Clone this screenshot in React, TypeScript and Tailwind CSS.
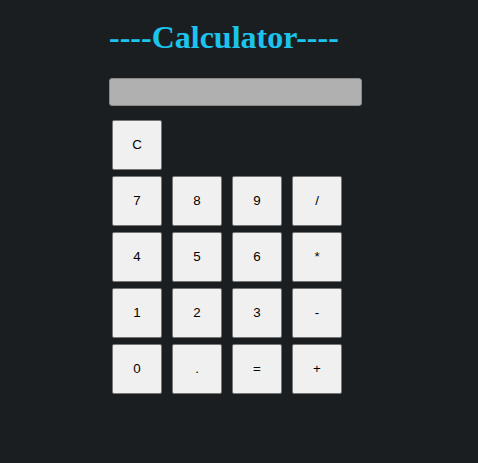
const rows = [
  ['7', '8', '9', '/'],
  ['4', '5', '6', '*'],
  ['1', '2', '3', '-'],
  ['0', '.', '=', '+'],
]

function Key({ label }: { label: string }) {
  return (
    <button className="w-[50px] h-[50px] bg-[#f0f0f0] border border-[#767676] rounded-[2px] text-[13.33px] text-black font-['Liberation_Sans',Arial,sans-serif] flex items-center justify-center">
      {label}
    </button>
  )
}

export default function App() {
  return (
    <div className="w-[478px] h-[463px] bg-[#1b1e21] pl-[109px] pt-[19px]">
      <h1 className="text-[32px] leading-[36px] font-bold text-[#1cc3ec] font-['Liberation_Serif','Times_New_Roman',serif]">
        ----Calculator----
      </h1>
      <input
        readOnly
        className="block mt-[23px] w-[253px] h-[28px] bg-[#b0b0b1] border border-[#8a8a8a] rounded-[3px] outline-none"
      />
      <div className="mt-[14px] ml-[3px] flex flex-col gap-[6px]">
        <div className="flex">
          <Key label="C" />
        </div>
        {rows.map((row, i) => (
          <div key={i} className="flex gap-[10px]">
            {row.map((k) => (
              <Key key={k} label={k} />
            ))}
          </div>
        ))}
      </div>
    </div>
  )
}
